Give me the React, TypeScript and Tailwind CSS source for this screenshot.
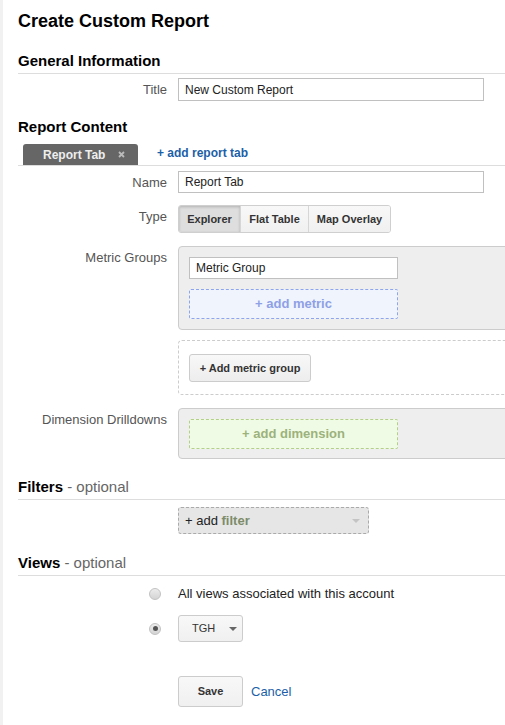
import React from "react";

const font = { fontFamily: '"Liberation Sans", Arial, sans-serif' };

function Row({
  label,
  children,
  className = "",
}: {
  label?: React.ReactNode;
  children: React.ReactNode;
  className?: string;
}) {
  return (
    <div className={`flex items-start ${className}`}>
      <div className="w-[149px] shrink-0 pt-[4px] text-right text-[13px] leading-[16px] text-[#555]">
        {label}
      </div>
      <div className="ml-[11px] min-w-0 flex-1">{children}</div>
    </div>
  );
}

function SectionHeading({
  title,
  optional,
  className = "",
}: {
  title: string;
  optional?: boolean;
  className?: string;
}) {
  return (
    <div
      className={`border-b border-[#dddddd] pb-[3px] text-[15px] leading-[18px] ${className}`}
    >
      <span className="font-bold text-black">{title}</span>
      {optional && <span className="text-[#666]"> - optional</span>}
    </div>
  );
}

function Radio({ checked }: { checked?: boolean }) {
  return (
    <span className="flex h-[12px] w-[12px] items-center justify-center rounded-full border border-[#c2c2c2] bg-gradient-to-b from-[#ececec] to-[#d4d4d4]">
      {checked && <span className="h-[5px] w-[5px] rounded-full bg-[#555]" />}
    </span>
  );
}

function Caret({ color = "#666" }: { color?: string }) {
  return (
    <svg width="8" height="4" viewBox="0 0 8 4">
      <path d="M0 0 L8 0 L4 4 Z" fill={color} />
    </svg>
  );
}

export default function App() {
  return (
    <div className="flex min-h-screen w-full overflow-hidden bg-white" style={font}>
      <div className="w-[3px] shrink-0 bg-[#f1f1f1]" />
      <div className="min-w-0 flex-1 pl-[15px] text-[#222]">
        <h1 className="mt-[10px] text-[18px] font-bold leading-[22px] text-black">
          Create Custom Report
        </h1>

        <SectionHeading title="General Information" className="mt-[20px]" />
        <Row label="Title" className="mt-[4px]">
          <div className="flex h-[23px] w-[306px] items-center border border-[#c0c0c0] px-[6px] text-[12px] text-[#222]">
            New Custom Report
          </div>
        </Row>

        <div className="mt-[17px] text-[15px] font-bold leading-[18px] text-black">
          Report Content
        </div>
        <div className="mt-[8px] flex items-end border-b border-[#dddddd]">
          <div className="ml-[5px] flex h-[21px] w-[115px] items-center rounded-t-[3px] bg-[#666] pl-[20px] text-[12px] font-bold text-[#eee]">
            Report Tab
            <svg className="ml-[13px]" width="7" height="7" viewBox="0 0 7 7">
              <path d="M1 1 L6 6 M6 1 L1 6" stroke="#bbb" strokeWidth="1.8" />
            </svg>
          </div>
          <span className="mb-[3px] ml-[19px] text-[12px] font-bold text-[#1c5fa8]">
            + add report tab
          </span>
        </div>

        <Row label="Name" className="mt-[5px]">
          <div className="flex h-[22px] w-[306px] items-center border border-[#c0c0c0] px-[6px] text-[12px] text-[#222]">
            Report Tab
          </div>
        </Row>

        <Row label="Type" className="mt-[12px]">
          <div className="flex h-[28px] w-fit overflow-hidden rounded-[3px] border border-[#cfcfcf] text-[11px] font-bold text-[#333]">
            <span className="flex w-[61px] items-center justify-center bg-[#dedede] shadow-[inset_0_1px_3px_rgba(0,0,0,0.2)]">
              Explorer
            </span>
            <span className="flex w-[68px] items-center justify-center border-l border-[#d6d6d6] bg-gradient-to-b from-[#f8f8f8] to-[#f0f0f0]">
              Flat Table
            </span>
            <span className="flex w-[82px] items-center justify-center border-l border-[#d6d6d6] bg-gradient-to-b from-[#f8f8f8] to-[#f0f0f0]">
              Map Overlay
            </span>
          </div>
        </Row>

        <Row label="Metric Groups" className="mt-[13px]">
          <div className="w-[360px] rounded-[4px] border border-[#cccccc] bg-[#eeeeee] p-[10px]">
            <div className="flex h-[22px] w-[209px] items-center border border-[#c0c0c0] bg-white px-[6px] text-[12px] text-[#222]">
              Metric Group
            </div>
            <div className="mt-[10px] flex h-[30px] w-[209px] items-center justify-center rounded-[2px] border border-dashed border-[#8ea5ee] bg-[#f0f4fd] text-[13px] font-bold text-[#8ea0e6]">
              + add metric
            </div>
          </div>
          <div className="mt-[10px] w-[360px] rounded-[4px] border border-dashed border-[#cccccc] pb-[12px] pl-[10px] pt-[13px]">
            <div className="flex h-[28px] w-[122px] items-center justify-center rounded-[3px] border border-[#cccccc] bg-gradient-to-b from-[#f8f8f8] to-[#ededed] text-[11px] font-bold text-[#333]">
              + Add metric group
            </div>
          </div>
        </Row>

        <Row label="Dimension Drilldowns" className="mt-[13px]">
          <div className="w-[360px] rounded-[4px] border border-[#cccccc] bg-[#eeeeee] pb-[9px] pl-[10px] pt-[10px]">
            <div className="flex h-[30px] w-[209px] items-center justify-center rounded-[2px] border border-dashed border-[#b3cf8a] bg-[#f0fbe5] text-[13px] font-bold text-[#9cb27c]">
              + add dimension
            </div>
          </div>
        </Row>

        <SectionHeading title="Filters" optional className="mt-[19px]" />
        <Row className="mt-[7px]">
          <div className="flex h-[27px] w-[191px] items-center justify-between rounded-[3px] border border-dashed border-[#aaaaaa] bg-[#e6e6e6] pl-[6px] pr-[8px] text-[13px]">
            <span>
              <span className="text-[#222]">+ add </span>
              <span className="font-bold text-[#7d8c6a]">filter</span>
            </span>
            <Caret color="#c4c4c4" />
          </div>
        </Row>

        <SectionHeading title="Views" optional className="mt-[20px]" />
        <div className="mt-[9px] flex h-[18px] items-center">
          <div className="flex w-[149px] shrink-0 justify-end pr-[6px]">
            <Radio />
          </div>
          <span className="ml-[11px] text-[13px] text-[#222]">
            All views associated with this account
          </span>
        </div>
        <div className="mt-[12px] flex items-center">
          <div className="flex w-[149px] shrink-0 justify-end pr-[6px]">
            <Radio checked />
          </div>
          <div className="ml-[11px] flex h-[27px] w-[65px] items-center gap-[14px] rounded-[3px] border border-[#cccccc] bg-gradient-to-b from-[#f8f8f8] to-[#f0f0f0] pl-[13px] text-[11px] text-[#333]">
            TGH
            <Caret />
          </div>
        </div>

        <div className="mt-[34px] flex items-center">
          <div className="w-[149px] shrink-0" />
          <div className="ml-[11px] flex h-[31px] w-[65px] items-center justify-center rounded-[3px] border border-[#cccccc] bg-gradient-to-b from-[#f8f8f8] to-[#f0f0f0] text-[11px] font-bold text-[#333]">
            Save
          </div>
          <span className="ml-[8px] text-[13px] text-[#1c5fa8]">Cancel</span>
        </div>
      </div>
    </div>
  );
}
